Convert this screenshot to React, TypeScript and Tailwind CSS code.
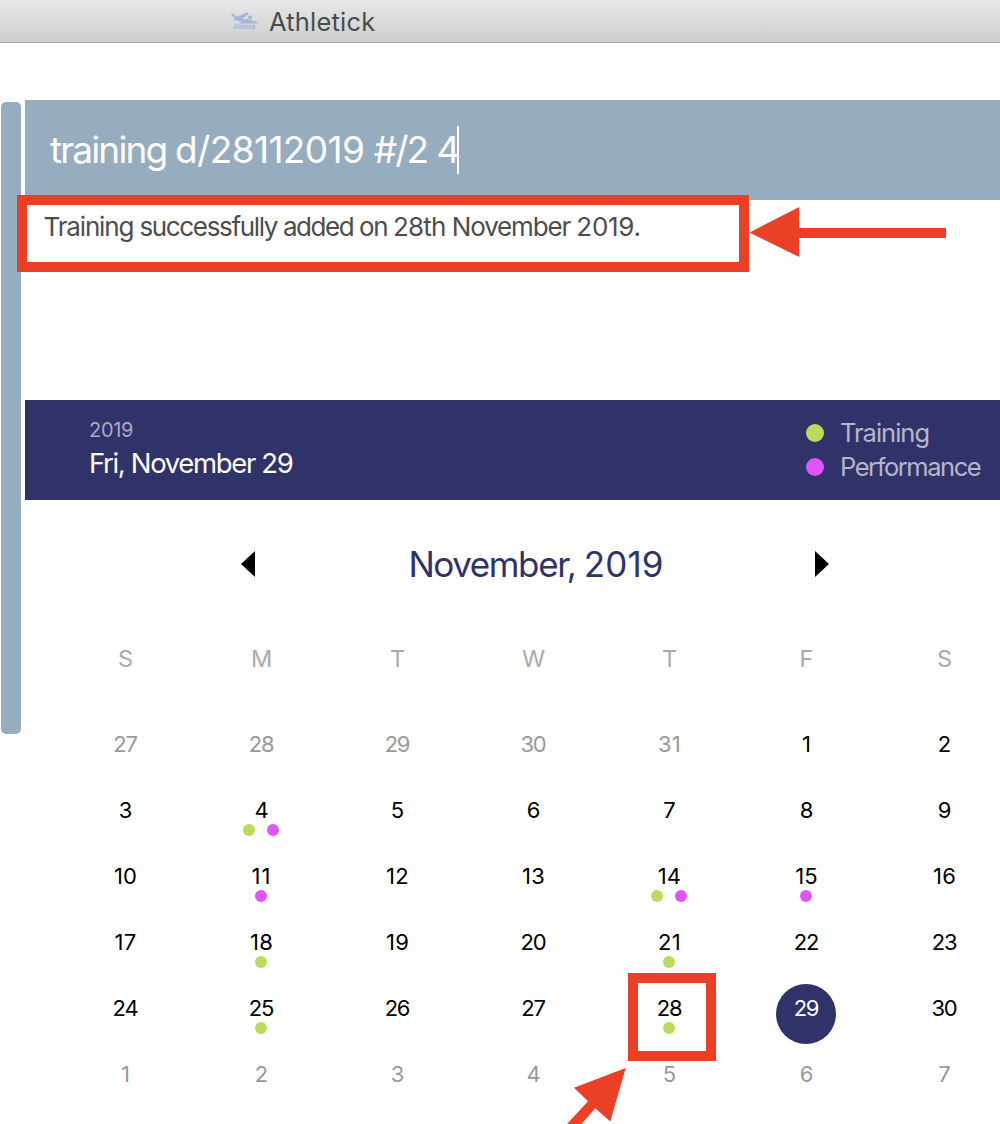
type Mark = 'training' | 'performance';
type Day = { label: string; outside?: boolean; selected?: boolean; marks?: Mark[] };

const weekdays = ['S', 'M', 'T', 'W', 'T', 'F', 'S'];

const marks: Record<number, Mark[]> = {
  4: ['training', 'performance'],
  11: ['performance'],
  14: ['training', 'performance'],
  15: ['performance'],
  18: ['training'],
  21: ['training'],
  25: ['training'],
  28: ['training'],
};

const days: Day[] = [
  ...[27, 28, 29, 30, 31].map((n) => ({ label: String(n), outside: true })),
  ...Array.from({ length: 30 }, (_, i) => ({
    label: String(i + 1),
    selected: i + 1 === 29,
    marks: marks[i + 1],
  })),
  ...[1, 2, 3, 4, 5, 6, 7].map((n) => ({ label: String(n), outside: true })),
];

function Logo() {
  return (
    <svg className="h-5 w-7" viewBox="0 0 28 20" fill="#a3b8dc">
      <path d="M.8 3.2 2.6 2.4 7 5.6 17 1.6 18.8 2 18 3.8 12.6 7 14.6 8.6 18.6 8 23.6 10 27.5 10.9 27.5 12.4H8L11.6 10.6 7.4 9.8 3 8.6 4.8 7.4Z" />
      <circle cx="20.2" cy="6.2" r="2" />
      <text x="3.4" y="18.4" fontSize="5.6" fontWeight="800" textLength="22" lengthAdjust="spacingAndGlyphs" fontFamily="Inter, sans-serif">
        Athletick
      </text>
    </svg>
  );
}

function TitleBar() {
  return (
    <header className="flex h-[43px] items-center border-b border-[#a5a5a5] bg-linear-to-b from-[#e8e8e8] to-[#cecece] pl-[230px]">
      <Logo />
      <h1 className="ml-[11px] pt-0.5 text-[25.5px] leading-[42px] tracking-[0.2px] text-[#4b4b4b]">Athletick</h1>
    </header>
  );
}

function Legend({ label, color, tracking }: { label: string; color: string; tracking: string }) {
  return (
    <div className="flex h-[34px] items-center">
      <span className={`size-[18px] shrink-0 rounded-full ${color}`} />
      <span className={`ml-4 text-[25.5px] whitespace-nowrap text-[#b6b6c9] ${tracking}`}>{label}</span>
    </div>
  );
}

function digitTracking(label: string) {
  if (label === '11') return 'tracking-[1px]';
  if (label.length === 2 && label.includes('1')) return 'tracking-[0.2px]';
  return label.length === 2 ? 'tracking-[-1.2px]' : 'tracking-normal';
}

function DayCell({ day }: { day: Day }) {
  const color = day.outside ? 'text-[#999999]' : day.selected ? 'text-white' : 'text-black';
  const nudge = day.label.length === 1 || day.label.includes('1') ? 'pl-px' : '';
  return (
    <div className="relative flex h-[66px] items-center justify-center">
      {day.selected && <span className="absolute top-[9px] size-[60px] rounded-full bg-[#30326a]" />}
      <span className={`relative text-[22px] ${nudge} ${digitTracking(day.label)} ${color}`}>{day.label}</span>
      <div className="absolute inset-x-0 top-[47px] flex justify-center gap-3">
        {day.marks?.map((mark) => (
          <span
            key={mark}
            className={`size-3 rounded-full ${mark === 'training' ? 'bg-[#bbdc5a]' : 'bg-[#df55fb]'}`}
          />
        ))}
      </div>
    </div>
  );
}

function Calendar() {
  return (
    <section>
      <div className="flex h-[100px] justify-between bg-[#30326a] pr-[19px] pl-16">
        <div className="pt-[18px]">
          <p className="text-[20px] leading-6 tracking-[-0.3px] text-[#a9aac2]">2019</p>
          <p className="mt-[5px] text-[27.5px] leading-8 tracking-[-1.35px] whitespace-nowrap text-white">Fri, November 29</p>
        </div>
        <div className="w-[175px] pt-4">
          <Legend label="Training" color="bg-[#bbdc5a]" tracking="tracking-[-1px]" />
          <Legend label="Performance" color="bg-[#df55fb]" tracking="tracking-[-1.45px]" />
        </div>
      </div>

      <div className="flex h-[128px] items-center justify-between pr-[171px] pl-[216px]">
        <svg className="h-[26px] w-[14px]" viewBox="0 0 14 26">
          <path d="M14 0V26L0 13Z" />
        </svg>
        <h2 className="pl-0.5 text-[35px] tracking-[-1.4px] whitespace-nowrap text-[#30326a]">
          November, <span className="tracking-[0.1px]">2019</span>
        </h2>
        <svg className="h-[26px] w-[14px]" viewBox="0 0 14 26">
          <path d="M0 0V26L14 13Z" />
        </svg>
      </div>

      <div className="ml-8 grid w-[956px] grid-cols-[repeat(5,136px)_138px_138px]">
        {weekdays.map((d, i) => (
          <div key={i} className="flex h-[83px] items-start justify-center pt-[13px] pl-px text-[23.5px] text-[#aaaaaa]">
            {d}
          </div>
        ))}
        {days.map((day, i) => (
          <DayCell key={i} day={day} />
        ))}
      </div>
    </section>
  );
}

function Annotations() {
  return (
    <>
      <div className="absolute top-[195px] left-[17px] h-[77px] w-[732px] border-10 border-[#eb4026]" />
      <svg className="absolute top-[207px] left-[749px] h-[50px] w-[197px]" viewBox="0 0 197 50" fill="#eb4026">
        <path d="M.5 25.5 50.2 0V21H197V31H50.2V50Z" />
      </svg>
      <div className="absolute top-[973px] left-[628px] size-[88px] border-10 border-[#eb4026]" />
      <svg className="absolute top-[1068px] left-[566px] h-14 w-[60px]" viewBox="0 0 60 56" fill="#eb4026">
        <path d="M59.7 0 8 19.7 22 33.3 1 56H15.5L29.3 40.3 44.3 53.6Z" />
      </svg>
    </>
  );
}

export default function App() {
  return (
    <div className="relative h-[1124px] w-[1000px] overflow-hidden bg-white font-['Inter',sans-serif]">
      <TitleBar />
      <div className="flex">
        <div className="mt-[59px] ml-px h-[632px] w-5 shrink-0 rounded-[5px] bg-[#96adc0]" />
        <main className="mt-[57px] ml-1 w-[975px]">
          <div className="flex h-[100px] items-center bg-[#96adc0] pl-[25px]">
            <span className="text-[37px] tracking-[-1.85px] whitespace-pre text-white">
              training <span className="tracking-[-0.6px]">d/28112019</span>
              <span className="tracking-[-2px] [word-spacing:1px]">{' #/2 4'}</span>
            </span>
            <span className="-ml-px h-12 w-0.5 bg-white" />
          </div>
          <div className="h-[200px] pt-[10px] pl-[18.5px]">
            <p className="text-[26px] leading-[34px] tracking-[-1.15px] whitespace-nowrap text-[#4d4d4d]">
              Training <span className="tracking-[-1.35px]">successfully </span>
              <span className="tracking-[-1.45px]">added on </span>
              <span className="tracking-[-0.8px]">28th</span> November <span className="tracking-[-0.3px]">2019.</span>
            </p>
          </div>
          <Calendar />
        </main>
      </div>
      <Annotations />
    </div>
  );
}
